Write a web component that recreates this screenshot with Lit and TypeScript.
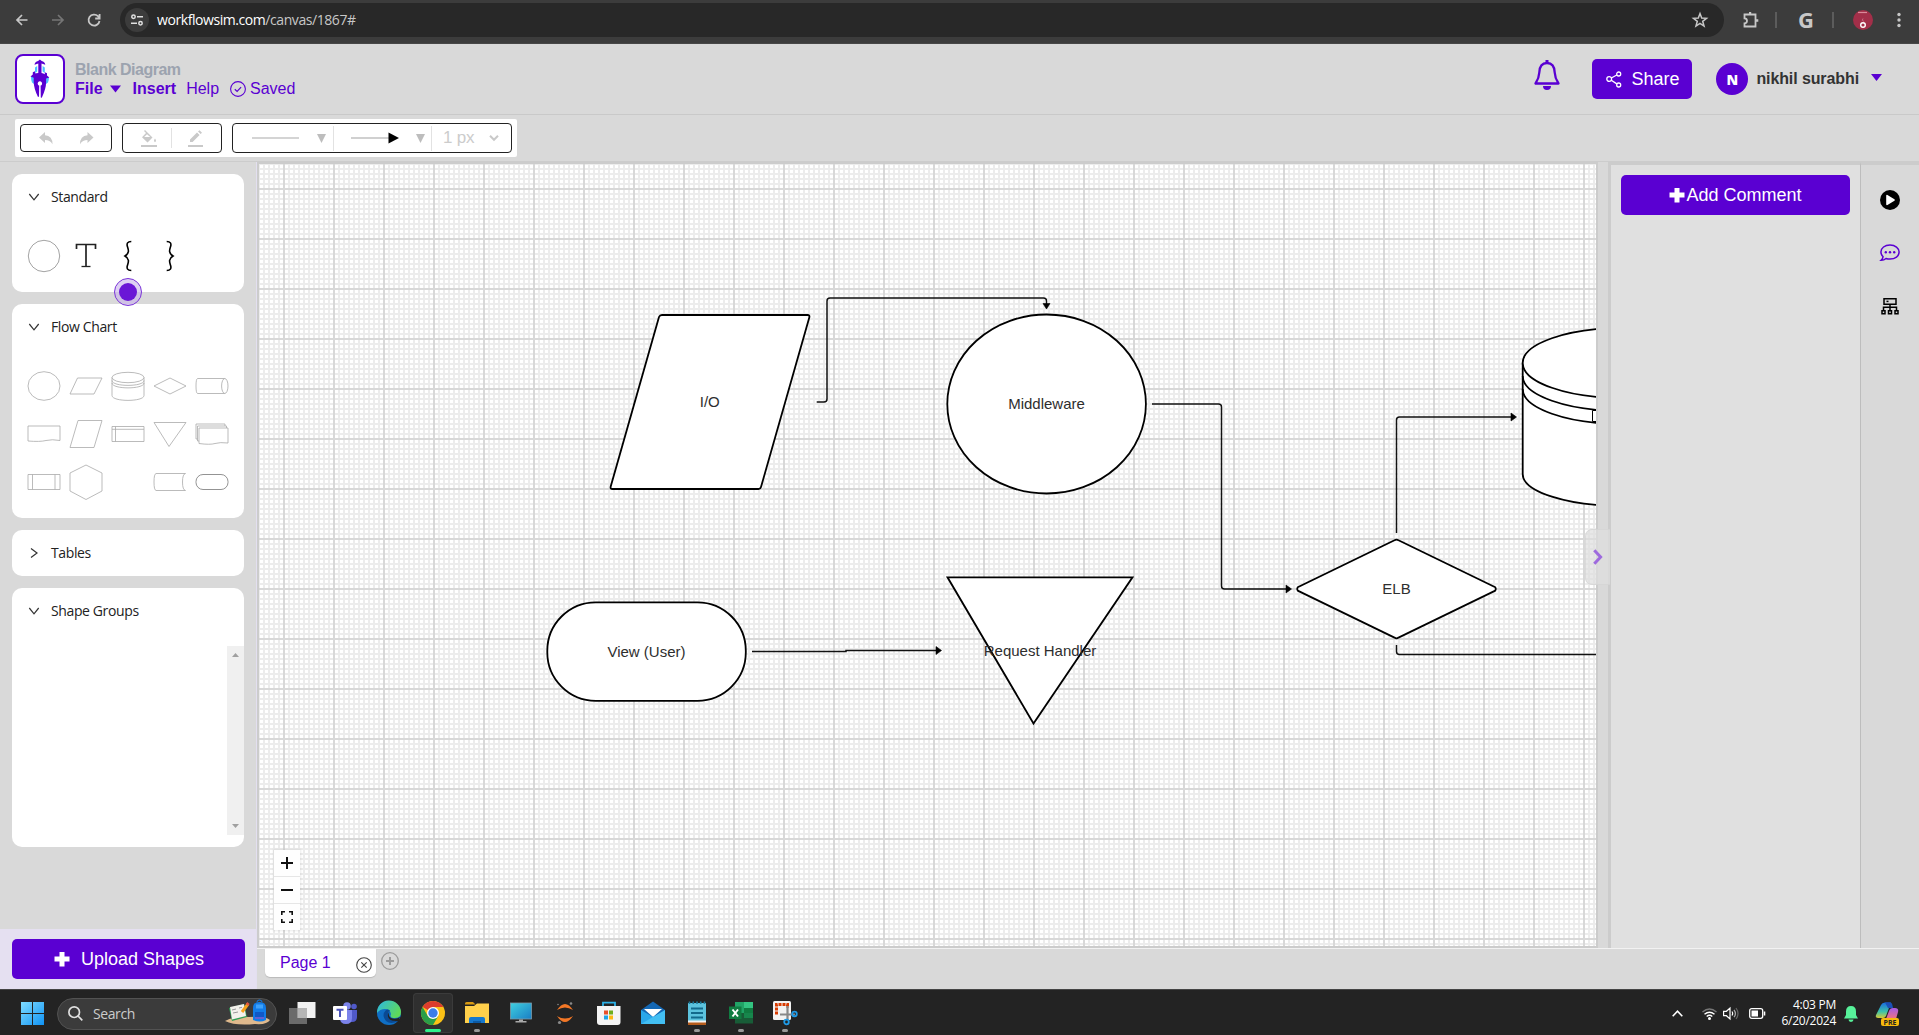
import { LitElement, html, svg, css } from "lit";
import { customElement } from "lit/decorators.js";

const base = css`
  * { box-sizing: border-box; }
  :host { display: block; font-family: "Liberation Sans", Arial, sans-serif; }
  svg { display: block; flex: none; overflow: visible; }
`;

const plus = (size: number) => html`<svg width=${size} height=${size} viewBox="0 0 16 16"><path fill="#fff" d="M5.500 1h5v4.500H15.500v5H10.500V15.500h-5V10.500H.5v-5H5.500z"/></svg>`;

@customElement("browser-bar")
class BrowserBar extends LitElement {
  static styles = [base, css`
    .bar { height: 44px; background: #3c3c3c; display: flex; align-items: center; padding: 0 14px 4px 14px; border-bottom: 1px solid #474747; }
    .nav { display: flex; width: 106px; gap: 20px; }
    .pill { flex: none; width: 1604px; height: 34px; border-radius: 17px; background: #282828; display: flex; align-items: center; padding: 0 16px 0 5px; }
    .site { width: 24px; height: 24px; border-radius: 50%; background: #3c3c3c; display: grid; place-items: center; }
    .url { flex: 1; margin-left: 8px; font: 14px "Open Sans", "Noto Sans", sans-serif; letter-spacing: -0.43px; color: #c7c7c7; }
    .url b { font-weight: 400; color: #fff; }
    .right { flex: 1; display: flex; align-items: center; margin-left: 17px; }
    .sep { width: 2px; height: 16px; background: #5c5c5c; }
    .g { font: 700 22px "Open Sans", sans-serif; color: #c7c7c7; line-height: 20px; width: 17px; margin: -2px 17px 0 21px; }
    .avatar { width: 20px; height: 20px; border-radius: 50%; background: #a22f49; margin: 0 24px 0 19px; }
  `];
  render() {
    return html`<div class="bar">
      <div class="nav">
        <svg width="16" height="16" viewBox="0 0 16 16" fill="none" stroke="#c7c7c7" stroke-width="1.700"><path d="M13.500 8H3M8 3 3 8l5 5"/></svg>
        <svg width="16" height="16" viewBox="0 0 16 16" fill="none" stroke="#757575" stroke-width="1.700"><path d="M2 8h10.500M8 3l5 5-5 5"/></svg>
        <svg width="16" height="16" viewBox="0 0 16 16" fill="none" stroke="#c7c7c7" stroke-width="1.800"><path d="M13.500 9A5.500 5.500 0 1 1 12 4.200L13.500 6M13.600 2v4.500H9.200"/></svg>
      </div>
      <div class="pill">
        <div class="site"><svg width="12" height="12" viewBox="0 0 12 12" fill="none" stroke="#e0e0e0" stroke-width="1.500"><circle cx="2.500" cy="2.800" r="1.700"/><path d="M6 2.800h6M0 9.200h6"/><circle cx="9.500" cy="9.200" r="1.700"/></svg></div>
        <div class="url"><b>workflowsim.com</b>/canvas/1867#</div>
        <svg width="16" height="16" viewBox="0 0 16 16" fill="none" stroke="#c7c7c7" stroke-width="1.500"><path d="m8 1.500 1.700 4.500 4.800.3-3.800 3 1.300 4.700L8 11.300 4 14l1.300-4.700-3.800-3 4.800-.3z"/></svg>
      </div>
      <div class="right">
        <svg width="20" height="18" viewBox="0 0 20 18" fill="none" stroke="#c7c7c7" stroke-width="1.800"><path d="M3.500 3.500h11v12h-11v-3.200a2.400 2.400 0 0 0 0-5z"/><path stroke-width="3" d="M8 2.400h2.200M15.800 8.300v2.400"/></svg>
        <div class="sep" style="margin-left:14px"></div>
        <div class="g">G</div>
        <div class="sep"></div>
        <div class="avatar"><svg width="20" height="20" viewBox="0 0 20 20" fill="none"><path d="M5 2.500h9" stroke="#d98a9a" stroke-width="1.200"/><circle cx="10" cy="15" r="2.300" stroke="#fff" stroke-width="1.400"/><path d="M10 8.500q-2 2 1 3" stroke="#c76a80"/></svg></div>
        <svg width="4" height="16" viewBox="0 0 4 16" fill="#c7c7c7"><circle cx="2" cy="2.500" r="1.700"/><circle cx="2" cy="8" r="1.700"/><circle cx="2" cy="13.500" r="1.700"/></svg>
      </div>
    </div>`;
  }
}

@customElement("app-header")
class AppHeader extends LitElement {
  static styles = [base, css`
    .head { height: 71px; background: #d9d9d9; border-bottom: 1px solid #c9c9c9; display: flex; align-items: center; padding: 0 37px 0 15px; color: #5a00d2; }
    .logo { width: 50px; height: 50px; border: 2px solid #5a00d2; border-radius: 8px; background: #fff; display: grid; place-items: center; }
    .names { margin-left: 10px; flex: 1; display: flex; flex-direction: column; padding-top: 1px; }
    .title { font: 700 16px/19px "Liberation Sans"; color: #9ca3af; letter-spacing: -0.5px; }
    .menu { display: flex; align-items: center; font-size: 16px; line-height: 20px; }
    .strong { font-weight: 700; }
    .share { margin-left: 32px; width: 100px; height: 40px; border-radius: 5px; background: #5a00d2; color: #fff; display: flex; align-items: center; gap: 9px; padding-left: 14px; font-size: 18px; }
    .face { margin-left: 24px; width: 32px; height: 32px; border-radius: 50%; background: #5a00d2; color: #fff; display: grid; place-items: center; font: 800 14px "Open Sans", sans-serif; }
    .user { margin: 0 12px 0 8px; color: #333; font: 700 16px "Liberation Sans"; letter-spacing: -0.1px; }
  `];
  render() {
    return html`<div class="head">
      <div class="logo"><svg width="20" height="40" viewBox="0 0 20 40">
        <g fill="#4cc3ff"><path d="M5 8.500 7.200 7v5.500L5 14zM14.800 8.500 12.600 7v5.500l2.200 1.500zM1 18h3v7l-2-1.500Q1 21 1 18zM19 18h-3v7l2-1.500Q19 21 19 18z"/></g>
        <g fill="#5a00d2"><path d="M9.900.5 11.700 2q3 .5 3.600 3.700L11.500 4.500V14q2 .3 3.300 1.200v-2l2.200 1v2.200l2.300 2-3.200 1.200v4q0 6-4.300 15.200l-1-.4-.2-11.800a2.200 2.200 0 1 0-1.400 0L9 37.600l-1 .4Q3.700 29 3.700 22.700v-4L.5 17.500l2.300-2v-2.200l2.200-1v2Q6.500 14.300 8.300 14V4.500L4.500 5.700Q5 2.500 8.100 2z"/></g>
      </svg></div>
      <div class="names">
        <div class="title">Blank Diagram</div>
        <div class="menu">
          <span class="strong">File</span>
          <svg style="margin:0 12px 0 7px" width="11" height="8" viewBox="0 0 11 8"><path fill="#5a00d2" d="M0 .5h11L5.500 7.500z"/></svg>
          <span class="strong">Insert</span>
          <span style="margin:0 11px 0 10px">Help</span>
          <svg width="16" height="16" viewBox="0 0 16 16" fill="none" stroke="#5a00d2"><circle cx="8" cy="8" r="7.400" stroke-width="1.100"/><path stroke-width="1.200" d="m4.800 8.300 2.300 2.200 4-4.400"/></svg>
          <span style="margin-left:4px">Saved</span>
        </div>
      </div>
      <svg style="margin-top:-9px" width="26" height="30" viewBox="0 0 26 30"><path d="M13 3c-6 0-7.500 4.500-7.700 9.500C5.100 17.500 4.500 19 1.500 23.500h23c-3-4.500-3.600-6-3.800-11C20.500 7.500 19 3 13 3z" fill="none" stroke="#5a00d2" stroke-width="2.300" stroke-linejoin="round"/><path fill="#5a00d2" d="M11.500 0h3v3h-3zM9 26h8a4 4 0 0 1-8 0z"/></svg>
      <div class="share"><svg width="16" height="17" viewBox="0 0 16 17" fill="none" stroke="#fff" stroke-width="1.300"><circle cx="3.200" cy="8" r="2.400"/><circle cx="12.700" cy="3" r="2"/><circle cx="12.700" cy="14" r="2"/><path d="m5.300 7 5.500-3M5.300 9.200l5.500 3.700"/></svg>Share</div>
      <div class="face">N</div>
      <div class="user">nikhil surabhi</div>
      <svg style="margin-top:-3px" width="11" height="7" viewBox="0 0 11 7"><path fill="#5a00d2" d="M0 0h11L5.500 7z"/></svg>
    </div>`;
  }
}

@customElement("tool-strip")
class ToolStrip extends LitElement {
  static styles = [base, css`
    .row { height: 46px; background: #d9d9d9; padding: 4px 15px; }
    .box { width: 502px; height: 38px; background: #fff; border-radius: 2px; display: flex; align-items: center; gap: 10px; padding-left: 5px; }
    .group { height: 30px; border: 1px solid #222; border-radius: 4px; display: flex; align-items: center; }
    .sep { width: 1px; height: 20px; background: #e2e2e2; }
    .tall { height: 25px; }
    .px { flex: none; font-size: 17px; color: #ccc; margin: 0 15px 0 11px; width: 31px; white-space: nowrap; letter-spacing: -0.2px; }
  `];
  render() {
    const tri = html`<svg width="9" height="9" viewBox="0 0 9 9"><path fill="#bdbdbd" d="M0 0h9L4.500 9z"/></svg>`;
    const undo = svg`<path fill="#c9c9c9" d="M0 5.500 6 0v3.200q7.500.5 7.500 9Q11 8 6 8v3z"/>`;
    return html`<div class="row"><div class="box">
      <div class="group" style="width:92px;height:28px;padding-left:18px;gap:27px">
        <svg width="14" height="12" viewBox="0 0 14 12">${undo}</svg>
        <svg width="14" height="12" viewBox="0 0 14 12"><g transform="translate(13.500 0) scale(-1 1)">${undo}</g></svg>
      </div>
      <div class="group" style="width:100px;padding-left:18px">
        <svg width="17" height="17" viewBox="0 0 17 17" fill="#c9c9c9"><path d="M0 15h16v2H0zM14 8.500q2 2.600 0 3.700-2-1.100 0-3.700z"/><path fill-rule="evenodd" d="M4 0 11.500 7.500 6.500 12.500 1 7.200 5 3 3 1zM6 4.200 3.200 7h6z"/></svg>
        <div class="sep" style="margin:0 16px 0 13px"></div>
        <svg width="16" height="17" viewBox="0 0 16 17" fill="#c9c9c9"><path d="M0 15h15v2H0zM2 12V9.500L9 2.500 11.600 5 4.600 12zM10 1.500 11.500.2 14 2.700 12.600 4z"/></svg>
      </div>
      <div class="group" style="width:280px;padding-left:19px">
        <svg width="47" height="2"><path d="M0 1h47" stroke="#d4d4d4" stroke-width="2"/></svg>
        <div style="margin:0 7px 0 18px">${tri}</div>
        <div class="sep tall"></div>
        <svg style="margin:0 17px 0 17px" width="48" height="12" viewBox="0 0 48 12"><path d="M0 6h38" stroke="#d0d0d0" stroke-width="2"/><path d="M37.500.5 48 6 37.500 11.500z"/></svg>
        ${tri}
        <div class="sep tall" style="margin-left:6px"></div>
        <div class="px">1 px</div>
        <svg width="10" height="6" viewBox="0 0 10 6" fill="none" stroke="#c9c9c9" stroke-width="2"><path d="m1 .8 4 4 4-4"/></svg>
      </div>
    </div></div>`;
  }
}

const ST = "#a9a9a9";
const shapes = [
  svg`<ellipse rx="16" ry="14.300"/>`,
  svg`<path d="M-8.500-8H16L8 8H-16z"/>`,
  svg`<path d="M-16-8.500V9.500C-16 16 16 16 16 9.500V-8.500M-16-5.500C-16 1 16 1 16-5.500M-16-3C-16 3.500 16 3.500 16-3"/><ellipse cy="-8.500" rx="16" ry="5.200"/>`,
  svg`<path d="M0-8 16 0 0 8-16 0z"/>`,
  svg`<path d="M12.700-7.500H-14.500Q-16-7-16 0T-14.500 7.500H12.700"/><ellipse cx="12.800" rx="3.200" ry="7.500"/>`,
  svg`<path d="M-16-8H16V6.500Q8 5 2 6.500T-16 7z"/>`,
  svg`<path d="M-8-13.500H16L8 13.500H-16z"/>`,
  svg`<path d="M-16-7.500H16V7.500H-16zM-12.500-7.500V7.500M-16-4.700H16"/>`,
  svg`<path d="M-16-11.500H16L-1 12.500z"/>`,
  svg`<path d="M-13-6H16V9Q8 8 3 9.500T-13 9.500zM-13 7H-14.500V-8H14.500V-6M-14.500 5H-16V-10H13V-8"/>`,
  svg`<path d="M-16-7.500H16V7.500H-16zM-11.500-7.500V7.500M11-7.500V7.500"/>`,
  svg`<path d="M0-17 16-9V9L0 17.500-16 9V-9z"/>`,
  svg``,
  svg`<path d="M15.500-8.500H-14Q-16-8-16 0T-14 8.500H15.500Q12.500 8 12.500 0T15.500-8.500z"/>`,
  svg`<rect x="-16" y="-7.500" width="32" height="15" rx="7" stroke="#777"/>`,
];

@customElement("shape-panel")
class ShapePanel extends LitElement {
  static styles = [base, css`
    :host { width: 257px; display: flex; flex-direction: column; background: #d9d9d9; border-right: 1px solid #e3dff0; }
    .list { flex: 1; padding: 12px 12px 0; display: flex; flex-direction: column; gap: 12px; }
    .card { background: #fff; border-radius: 10px; position: relative; }
    .title { height: 46px; display: flex; align-items: center; gap: 12px; padding: 0 0 1px 17px; font: 14px "Open Sans", "Noto Sans", sans-serif; letter-spacing: -0.38px; color: #222; }
    .icons { display: grid; grid-template-columns: repeat(5, 42px); padding: 12px 11px; }
    .dot { position: absolute; left: 102px; top: 104px; width: 28px; height: 28px; border-radius: 50%; border: 1px solid #7b35d8; background: rgba(200, 178, 235, 0.6); display: grid; place-items: center; z-index: 2; }
    .dot::after { content: ""; width: 18px; height: 18px; border-radius: 50%; background: #6a17d6; }
    .well { height: 213px; padding: 12px 0; display: flex; justify-content: flex-end; }
    .scroll { width: 17px; background: #f0f0f0; display: flex; flex-direction: column; justify-content: space-between; align-items: center; padding: 7px 0; }
    .foot { height: 60px; background: #e5e0f1; padding: 10px 12px; }
    .up { width: 233px; height: 40px; border-radius: 5px; background: #5a00d2; color: #fff; font-size: 18px; display: flex; align-items: center; justify-content: center; gap: 11px; padding-left: 1px; }
  `];
  private title(t: string, open = true) {
    return html`<div class="title"><svg width="10" height="10" viewBox="0 0 10 10" fill="none" stroke="#333" stroke-width="1.200"><path d=${open ? "M.3 2 5 7.800 9.700 2" : "M2 .5 8 5 2 9.500"}/></svg>${t}</div>`;
  }
  render() {
    const cell = (s: unknown, stroke = ST, w = 0.8) => html`<svg width="42" height="48" viewBox="-21 -24 42 48" fill="none" stroke=${stroke} stroke-width=${w}>${s}</svg>`;
    const brace = svg`<path d="M3.300-14.500C-.5-14.500-1.500-12.500-.6-9.500S2-3-3 0C2 3 .3 6.500-.6 9.500S-.5 14.500 3.300 14.500"/>`;
    return html`
      <div class="list">
        <div class="card">${this.title("Standard")}
          <div class="icons">
            ${cell(svg`<circle r="15.700"/>`, "#999", 0.9)}
            ${cell(svg`<path stroke-width="1.700" d="M-9.500-7V-11.500H9.500V-7"/><path d="M0-11.500V10.500" stroke-width="1.700"/><path stroke-width="1.300" d="M-4.500 10.500H4.500"/>`, "#222")}
            ${cell(brace, "#000", 1.6)}
            ${cell(svg`<g transform="scale(-1 1)">${brace}</g>`, "#000", 1.6)}
          </div>
          <div class="dot"></div>
        </div>
        <div class="card">${this.title("Flow Chart")}<div class="icons">${shapes.map((s) => cell(s))}</div></div>
        <div class="card">${this.title("Tables", false)}</div>
        <div class="card">${this.title("Shape Groups")}
          <div class="well"><div class="scroll">
            <svg width="7" height="4"><path fill="#a0a0a0" d="M0 4h7L3.500 0z"/></svg>
            <svg width="7" height="4"><path fill="#a0a0a0" d="M0 0h7L3.500 4z"/></svg>
          </div></div>
        </div>
      </div>
      <div class="foot"><div class="up">${plus(16)}Upload Shapes</div></div>`;
  }
}

@customElement("flow-canvas")
class FlowCanvas extends LitElement {
  static styles = [base, css`
    :host { width: 1341px; height: 786px; border: 2px solid #ccc; position: relative; overflow: hidden; }
    text { font: 15px "Liberation Sans", Arial, sans-serif; text-anchor: middle; fill: #2e2e2e; }
    .board { overflow: hidden; }
    .zoom { position: absolute; left: 15px; top: 686px; width: 26px; display: flex; flex-direction: column; gap: 1px; background: #e6e6e6; box-shadow: 0 0 2px 1px rgba(0, 0, 0, 0.08); }
    .zoom div { height: 26px; background: #fefefe; display: grid; place-items: center; }
  `];
  render() {
    return html`
      <svg class="board" width="1337" height="782" viewBox="259 164 1337 782">
        <defs>
          <pattern id="minor" x="283" y="188" width="5" height="5" patternUnits="userSpaceOnUse"><path fill="#ececec" d="M0 0H5V2H2V5H0z"/></pattern>
          <pattern id="major" x="283" y="188" width="50" height="50" patternUnits="userSpaceOnUse"><path fill="#d8d8d8" d="M0 0H50V2H2V50H0z"/></pattern>
        </defs>
        <rect x="259" y="164" width="1337" height="782" fill="#fff"/>
        <rect x="259" y="164" width="1337" height="782" fill="url(#minor)"/>
        <rect x="259" y="164" width="1337" height="782" fill="url(#major)"/>
        <g fill="none" stroke="#111" stroke-width="1.500">
          <path d="M816.700 402H824q3 0 3-3V301q0-3 3-3H1043.500q3 0 3 3V304"/>
          <path d="M1152 404H1218.500q3 0 3 3V586q0 3 3 3H1287"/>
          <path d="M1396.500 533V420q0-3 3-3H1512"/>
          <path d="M1396.500 645V651.600q0 3 3 3H1600"/>
          <path d="M752 651.400H846V650.500H937"/>
        </g>
        <path d="M1043 303.500h7L1046.500 309zM1286 585v8L1291.500 589zM1511 413v8L1516.500 417zM936 646.500v8L941.500 650.500z" stroke="#000" stroke-width=".6" stroke-linejoin="round"/>
        <g fill="#fff" stroke="#000" stroke-width="1.800" stroke-linejoin="round">
          <path d="M662 315H807.500Q810 315 809.300 317.500L761 487Q760.500 489 758.500 489H612.500Q610 489 610.700 486.500L659 317Q659.800 315 662 315z"/>
          <ellipse cx="1046.600" cy="404" rx="99.300" ry="89.500"/>
          <path d="M1394.500 540.200Q1396.500 539 1398.500 540.200L1495.300 587.300Q1496.300 589 1495.300 590.600L1398.500 637.600Q1396.500 639 1394.500 637.600L1297.700 590.600Q1296.700 589 1297.700 587.300z"/>
          <rect x="547.300" y="602.300" width="198.500" height="98.500" rx="48.500"/>
          <path d="M947.500 577.300H1132.500L1033.500 723.500z" stroke-linejoin="miter"/>
          <path d="M1522.700 363V474A99.600 32 0 0 0 1721.900 474V363z"/>
          <path fill="none" d="M1522.700 389A99.600 35 0 0 0 1721.900 389M1522.700 376A99.600 35 0 0 0 1721.900 376"/>
          <ellipse cx="1622.300" cy="363" rx="99.600" ry="35"/>
          <rect x="1592.500" y="410.500" width="60" height="11" stroke-width="1"/>
        </g>
        <text x="709.800" y="407">I/O</text>
        <text x="1046.500" y="409">Middleware</text>
        <text x="1396.500" y="594">ELB</text>
        <text x="646.500" y="657">View (User)</text>
        <text x="1040" y="656">Request Handler</text>
      </svg>
      <div class="zoom">
        <div><svg width="12" height="12"><path d="M6 0v12M0 6h12" stroke="#111" stroke-width="2"/></svg></div>
        <div><svg width="12" height="2"><path d="M0 1h12" stroke="#111" stroke-width="2"/></svg></div>
        <div><svg width="12" height="12" viewBox="0 0 12 12" fill="none" stroke="#111" stroke-width="1.600"><path d="M.8 4V.8H4M8 .8h3.200V4M11.200 8v3.200H8M4 11.200H.8V8"/></svg></div>
      </div>`;
  }
}

@customElement("comment-panel")
class CommentPanel extends LitElement {
  static styles = [base, css`
    :host { flex: 1; display: flex; position: relative; padding-left: 10px; background: #d9d9d9; }
    .panel { width: 252px; border: solid #ccc; border-width: 3px 0 0 3px; background: #e0e0e0; padding: 10px; }
    .rail { flex: 1; border-left: 1px solid #bdbdbd; border-top: 3px solid #ccc; display: flex; flex-direction: column; align-items: center; gap: 33px; padding: 25px 0 0 0; }
    .add { width: 229px; height: 40px; border-radius: 5px; background: #5a00d2; color: #fff; font-size: 18px; display: flex; align-items: center; justify-content: center; gap: 1px; }
    .fold { position: absolute; left: -13px; top: 367px; width: 25px; height: 56px; border-radius: 7px 0 0 7px; background: rgba(222, 222, 222, 0.7); border: 1px solid rgba(205, 205, 205, 0.5); border-right: 0; display: grid; place-items: center; }
  `];
  render() {
    return html`
      <div class="fold"><svg width="10" height="16" viewBox="0 0 10 16" fill="none" stroke="#9e6ade" stroke-width="3"><path d="m1.300 1.300 6.300 6.700-6.300 6.700"/></svg></div>
      <div class="panel"><div class="add">${plus(16)}Add Comment</div></div>
      <div class="rail">
        <svg width="20" height="20" viewBox="0 0 20 20"><circle cx="10" cy="10" r="10"/><path d="M7 5.600 14 10 7 14.400z" fill="#fff" stroke="#fff" stroke-width="1.600" stroke-linejoin="round"/></svg>
        <svg width="20" height="20" viewBox="0 0 20 20"><path d="M10 2C4.800 2 .9 5 .9 9c0 2 .9 3.500 2.200 4.700-.2 1.500-.9 2.600-2 3.600 1.900 0 3.700-.7 4.900-1.800 1.200.4 2.600.6 4 .6 5.200 0 9.100-3 9.100-7S15.200 2 10 2z" fill="none" stroke="#5a00d2" stroke-width="1.500"/><g fill="#5a00d2"><circle cx="5.800" cy="9.200" r="1.200"/><circle cx="10" cy="9.200" r="1.200"/><circle cx="14.200" cy="9.200" r="1.200"/></g></svg>
        <svg width="20" height="20" viewBox="0 0 20 20" fill="none" stroke="#000" stroke-width="1.500"><path d="M4 2.700h12v5.500H4zM10 8.200v7M3.500 15v-3.800h13V15M2 14.700h3v3H2zM8.500 14.700h3v3h-3zM15 14.700h3v3h-3z"/><path d="M6.500 5.400h2"/></svg>
      </div>`;
  }
}

const taskIcons = [
  svg`<rect x="-3.500" y="-11" width="18" height="16" fill="#f2f2f2"/><rect x="-12" y="-5" width="18" height="16" fill="#777" opacity=".85"/><rect x="-3.500" y="-5" width="9.500" height="10" fill="#b5b5b5"/>`,
  svg`<circle cx="2" cy="-7" r="3.800" fill="#7b83eb"/><circle cx="9" cy="-6.500" r="2.800" fill="#5059c9"/><path d="M4-3h8V4q0 5-5 5H4z" fill="#5059c9"/><path d="M-5-3H7V5q0 6-6 6T-5 5z" fill="#7b83eb"/><rect x="-12" y="-7" width="14" height="14" rx="1" fill="#fff"/><path d="M-8.500-3.300h7M-5-3.300V4" stroke="#4b53bc" stroke-width="2" fill="none"/>`,
  svg`<defs><linearGradient id="e1" x1="0" y1="0" x2="1" y2=".5"><stop stop-color="#2bb8e6"/><stop offset="1" stop-color="#5fd95a"/></linearGradient></defs><circle r="12" fill="#0f6fc5"/><path d="M-12 0A12 12 0 0 1 12-1Q12 5 6 5T2 1Q1-4-4-4T-12 0z" fill="url(#e1)"/><path d="M-3-3Q-8 2-3 8 2 12 9 8-1 8-1 1-1-2 1-2.500-1-4-3-3z" fill="#0a4a94"/><path d="M1-2Q-2 2 2 5 7 7 11 4 9 8 12 5V9L7 8Q-2 8-1 1z" fill="#232323"/>`,
  svg`<circle r="12" fill="#fbc116"/><path d="M0 0-10.400-6A12 12 0 0 1 10.400-6H0z" fill="#dc3c2e"/><path d="M-10.400-6A12 12 0 0 0 0 12L5.200 3-5.200 3z" fill="#2a9e48"/><circle r="6" fill="#fff"/><circle r="4.700" fill="#3b7de9"/>`,
  svg`<path d="M-12-9.500q0-1.500 1.500-1.500H-4L-1.500-8.500H-12z" fill="#d89a12"/><path d="M-12-7H-3L0-9.500H12V10H-12z" fill="#ffd04b"/><path d="M-8 10V6q0-2 2-2H6q2 0 2 2v4z" fill="#1578cf"/><path d="M-4 10V8H4v2z" fill="#0c5aa5"/>`,
  svg`<defs><linearGradient id="m1" x1="0" y1="0" x2="1" y2="1"><stop stop-color="#3fd0e0"/><stop offset="1" stop-color="#1a7dc4"/></linearGradient></defs><rect x="-10.500" y="-10" width="21" height="16" fill="url(#m1)" stroke="#7c9aa8" stroke-width=".8"/><path d="M-2 6.500H2V8H5.500V9.500H-5.500V8H-2z" fill="#aaa"/>`,
  svg`<g fill="#f37726"><path d="M-8-3Q0-15 8-3 0-8-8-3zM-8 3Q0 15 8 3 0 8-8 3z"/></g><g fill="#8a8a8a"><circle cx="6" cy="-9.500" r="1.300"/><circle cx="-7" cy="-8.500" r=".8"/><circle cx="-5.500" cy="9.500" r="1.600"/></g>`,
  svg`<path d="M-6-6V-10.300H6V-6" fill="none" stroke="#2cb2e8" stroke-width="1.800"/><path d="M-12-7H11.500V9q0 3-3 3H-9q-3 0-3-3z" fill="#f4f4f4"/><path fill="#e8502a" d="M-5-2.500h4v4h-4z"/><path fill="#6fae1c" d="M0-2.500h4v4H0z"/><path fill="#1da4e8" d="M-5 2.500h4v4h-4z"/><path fill="#fcb813" d="M0 2.500h4v4H0z"/>`,
  svg`<path d="M-12-3 0-11.500 12-3V11H-12z" fill="#1467b3"/><path d="M-9-4H9L0 4z" fill="#fff"/><path d="M-12-3 0 4 12 11H-12z" fill="#2aa7ea"/><path d="M12-3 0 4-12 11H12z" fill="#43bff3"/>`,
  svg`<rect x="-9" y="-10" width="18" height="20" fill="#5cc3de"/><path d="M-9 9H9v3H-9z" fill="#b55c1c"/><path d="M-9 7.500H9v2H-9z" fill="#f2f2f2"/><path d="M-6-4.500H6M-6 0H6M-6 4.500H6" stroke="#136a8c" stroke-width="1.800"/><path d="M-7.500-11.500v2.500M-3.700-11.500v2.500M0-11.500v2.500M3.700-11.500v2.500M7.500-11.500v2.500" stroke="#1d7c9d" stroke-width="1.600"/>`,
  svg`<path d="M-6-11H3V0H-6z" fill="#21a366"/><path d="M3-11h9v6H3z" fill="#33c481"/><path d="M3-5h9V1H3z" fill="#107c41"/><path d="M-6 0H12V10.500H-6z" fill="#185c37"/><path d="M3 0h9V5H3z" fill="#17864c"/><rect x="-12" y="-6.500" width="12.500" height="12.500" fill="#107c41"/><path d="m-8.500-3.500 5.500 7M-3-3.500l-5.500 7" stroke="#fff" stroke-width="2" fill="none"/>`,
  svg`<rect x="-12" y="-12" width="18" height="19" rx="1.500" fill="#f2f2f2"/><path d="M-8.500 1.500V-8.500H2.500V-5" fill="none" stroke="#d83b01" stroke-width="3" stroke-dasharray="3 1"/><path d="M2.500-7V7M-5 1.500H10" stroke="#888" stroke-width="2.200"/><circle cx="9.500" cy="1" r="2.300" fill="none" stroke="#1e9be8" stroke-width="1.800"/><circle cx="1.500" cy="9" r="2.300" fill="none" stroke="#1e9be8" stroke-width="1.800"/>`,
];

@customElement("task-bar")
class TaskBar extends LitElement {
  static styles = [base, css`
    .bar { height: 46px; background: #232323; border-top: 1px solid #444; display: flex; align-items: center; padding: 0 19px 0 21px; font-family: "Open Sans", "Noto Sans", sans-serif; color: #fff; }
    .search { margin: 2px 2px 0 13px; width: 220px; height: 32px; border-radius: 16px; background: #3b3b3b; border: 1px solid #525252; display: flex; align-items: center; padding: 0 5px 1px 10px; font-size: 14px; letter-spacing: -0.4px; color: #ccc; }
    .search span { flex: 1; margin-left: 10px; }
    .app { width: 40px; height: 40px; margin: 1px 2px 0; border-radius: 4px; position: relative; }
    .on { background: #2f2f2f; box-shadow: inset 0 0 0 1px #3b3b3b; }
    .mark { position: absolute; bottom: 1px; left: 17px; width: 6px; height: 3px; border-radius: 2px; background: #999; }
    .on .mark { left: 12px; width: 16px; background: #2ff18c; }
    .tray { margin-left: auto; display: flex; align-items: center; padding-top: 2px; }
    .clock { width: 67px; margin: -1px 8px 0 3px; display: flex; flex-direction: column; align-items: flex-end; font-size: 12px; line-height: 16px; letter-spacing: -0.25px; white-space: nowrap; }
  `];
  render() {
    const running = [3, 4, 9, 10, 11];
    return html`<div class="bar">
      <svg width="23" height="23" viewBox="0 0 23 23" style="margin-top:2px"><defs><linearGradient id="w" x1="0" y1="0" x2="1" y2="1"><stop stop-color="#7fdcff"/><stop offset="1" stop-color="#1093f5"/></linearGradient></defs><path fill="url(#w)" d="M0 0h11v11H0zM12 0h11v11H12zM0 12h11v11H0zM12 12h11v11H12z"/></svg>
      <div class="search">
        <svg width="15" height="15" viewBox="0 0 15 15" fill="none" stroke="#e0e0e0" stroke-width="1.700"><circle cx="6.200" cy="6.200" r="5.300"/><path d="m10 10 4.300 4.300"/></svg>
        <span>Search</span>
        <svg width="46" height="26" viewBox="0 0 46 26"><path d="M0 21Q10 16 24 17 40 16 45 20 42 25 30 24 10 26 0 21z" fill="#dfb98d"/><path d="m4 8 15-4 3 13-15 4z" fill="#2f9e56"/><path d="m5 7 14-3 2 12-14 3.500z" fill="#f3f1ec"/><path d="m7 10 4-1M8 13l5-1M14 8l3-.7" stroke="#999"/><path d="m17 12 6-8" stroke="#f6a21b" stroke-width="3"/><path d="m22 5 1.500-2" stroke="#e2553e" stroke-width="3"/><path d="M28 20V8q0-6 6.500-6T41 8V20q-6 3-13 0z" fill="#127ce8"/><path d="M32 2q0-2 2.500-2T37 2" fill="none" stroke="#127ce8"/><path d="M30 12h9v7h-9z" fill="#1058c7"/><path d="M31 4.500h7v4h-7z" fill="#3ea2fa"/><path d="M30 18h9" stroke="#b36be0"/></svg>
      </div>
      ${taskIcons.map((icon, i) => html`<div class="app ${i === 3 ? "on" : ""}"><svg width="40" height="40" viewBox="-20 -20 40 40">${icon}</svg>${running.includes(i) ? html`<div class="mark"></div>` : ""}</div>`)}
      <div class="tray">
        <svg width="11" height="7" viewBox="0 0 11 7" fill="none" stroke="#fff" stroke-width="1.600"><path d="M.7 6.200 5.500 1.200l4.800 5"/></svg>
        <svg style="margin-left:19px" width="15" height="12" viewBox="0 0 15 12" fill="none" stroke="#fff" stroke-width="1.400"><path stroke="#777" d="M.5 4q7-6 14 0"/><path d="M2.500 6.300q5-4.300 10 0M4.700 8.500q2.800-2.400 5.600 0"/><circle cx="7.500" cy="10.500" r=".8" fill="#fff"/></svg>
        <svg style="margin-left:6px" width="17" height="13" viewBox="0 0 17 13" fill="none" stroke="#fff" stroke-width="1.200"><path d="M.6 4.300h2.800L7 1v11L3.400 8.700H.6zM9 4.500q1.300 2 0 4"/><path d="M11 2.800q2.800 3.700 0 7.400" stroke="#aaa"/><path stroke="#666" d="M13 1q4 5.500 0 11"/></svg>
        <svg style="margin-left:9px" width="17" height="11" viewBox="0 0 17 11"><rect x=".7" y=".7" width="13" height="9.600" rx="2" fill="none" stroke="#fff" stroke-width="1.300"/><path fill="#fff" d="M2.500 2.500h6.500v6H2.500zM14.800 3.500h1.500v4h-1.500z"/></svg>
        <div class="clock"><span>4:03 PM</span><span>6/20/2024</span></div>
        <svg width="14" height="16" viewBox="0 0 14 16" fill="#57f29a"><path d="M7 0Q2 0 2 5.500V9L0 12.500H14L12 9V5.500Q12 0 7 0zM4.500 13.500h5a2.500 2.500 0 0 1-5 0z"/></svg>
        <svg style="margin-left:17px" width="25" height="24" viewBox="0 0 25 24"><defs><linearGradient id="c1" x1="0" y1="0" x2="0" y2="1"><stop stop-color="#1a6de0"/><stop offset=".6" stop-color="#3dc3a8"/><stop offset="1" stop-color="#d8c936"/></linearGradient><linearGradient id="c2" x1="0" y1="0" x2="0" y2="1"><stop stop-color="#a35ce8"/><stop offset="1" stop-color="#f2737c"/></linearGradient></defs><path fill="url(#c1)" d="M6 3q1-2.500 4-2.500h6L11 14q-1 2-3 2H3q-3 0-2-3z"/><path fill="#1b50b8" d="M10 .5h5q2 0 2.500 3L18 6h-5z"/><path fill="url(#c2)" d="M14 9q1-3 4-3h2q4 0 3 4l-2 7H11z"/><rect x="6" y="16" width="18" height="8" rx="2" fill="#f8b90c"/><text x="15" y="22.600" font-family="Open Sans" font-size="7" font-weight="700" text-anchor="middle" fill="#222">PRE</text></svg>
      </div>
    </div>`;
  }
}

@customElement("app-root")
class AppRoot extends LitElement {
  static styles = [base, css`
    :host { width: 1919px; height: 1035px; overflow: hidden; background: #d9d9d9; }
    .main { height: 828px; display: flex; border-top: 1px solid #ccc; }
    .right { flex: 1; display: flex; flex-direction: column; }
    .work { display: flex; height: 786px; }
    .tabs { flex: 1; border-top: 1px solid #f2f2f2; display: flex; gap: 5px; padding-left: 8px; }
    .tab { width: 111px; height: 28px; background: #fff; border-radius: 0 0 5px 5px; box-shadow: 0 1px 1px rgba(0, 0, 0, 0.15); display: flex; align-items: center; justify-content: space-between; padding: 0 4px 0 15px; font-size: 16px; color: #5a00d2; }
  `];
  render() {
    return html`
      <browser-bar></browser-bar>
      <app-header></app-header>
      <tool-strip></tool-strip>
      <div class="main">
        <shape-panel></shape-panel>
        <div class="right">
          <div class="work"><flow-canvas></flow-canvas><comment-panel></comment-panel></div>
          <div class="tabs">
            <div class="tab">Page 1<svg style="margin-top:3px" width="16" height="16" viewBox="0 0 16 16" fill="none" stroke="#444" stroke-width="1.100"><circle cx="8" cy="8" r="7.300"/><path d="m5.300 5.300 5.400 5.400M10.700 5.300l-5.400 5.400"/></svg></div>
            <svg style="margin-top:3px" width="18" height="18" viewBox="0 0 18 18" fill="none" stroke="#9b9b9b" stroke-width="1.300"><circle cx="9" cy="9" r="8.300"/><path stroke-width="2" d="M9 5v8M5 9h8"/></svg>
          </div>
        </div>
      </div>
      <task-bar></task-bar>`;
  }
}
